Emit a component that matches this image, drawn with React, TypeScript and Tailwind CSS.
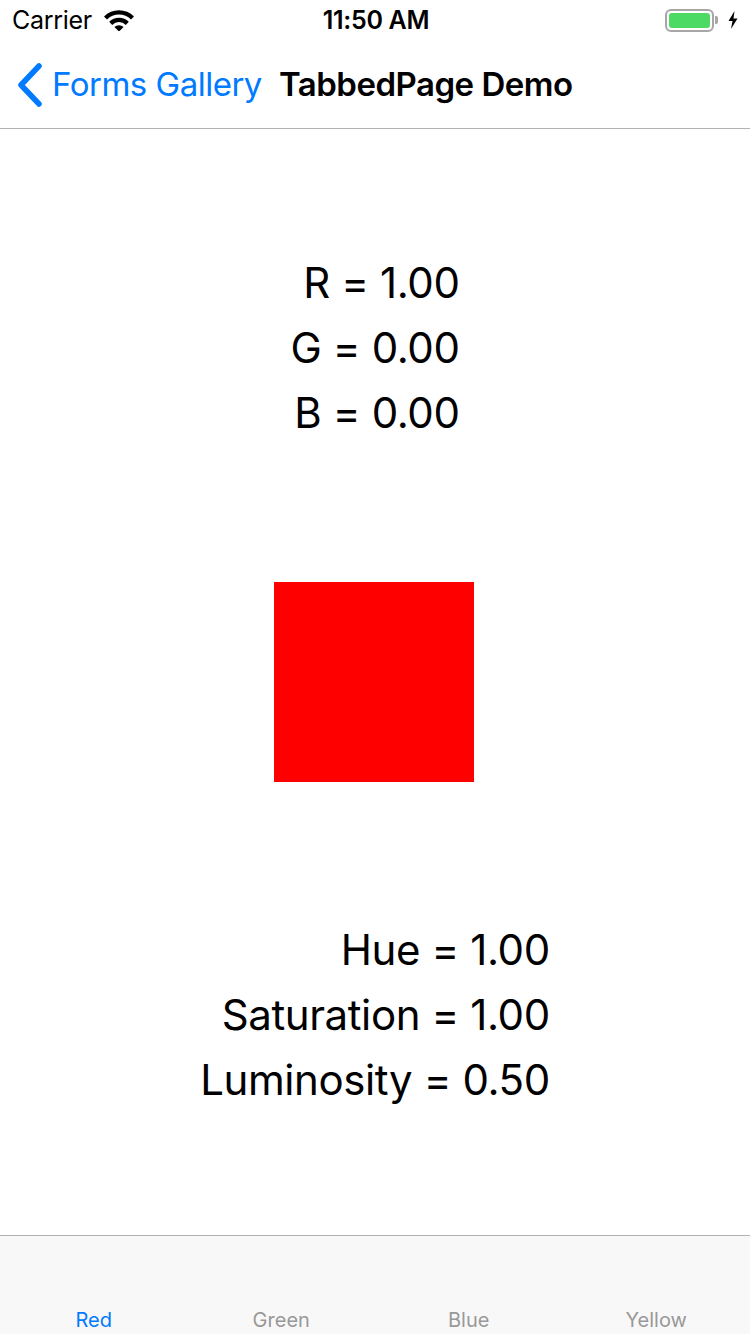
import React from 'react';

const font = { fontFamily: 'Inter, "Noto Sans", sans-serif' };

const Wifi = () => (
  <svg width="32" height="22" viewBox="0 0 32 22" className="ml-[11px]">
    <path d="M1 7.5 A21 21 0 0 1 31 7.5 L28 10.6 A16.6 16.6 0 0 0 4 10.6 Z" fill="#000" />
    <path d="M6.2 12.8 A13.6 13.6 0 0 1 25.8 12.8 L22.8 15.9 A9.3 9.3 0 0 0 9.2 15.9 Z" fill="#000" />
    <path d="M11.4 18.1 A6.4 6.4 0 0 1 20.6 18.1 L16 22.5 Z" fill="#000" />
  </svg>
);

const Battery = () => (
  <div className="flex items-center">
    <div className="w-[49px] h-[23px] rounded-[6px] border-[2px] border-[#a6a6a6] p-[2px] box-border">
      <div className="w-full h-full rounded-[3px] bg-[#4cd964]" />
    </div>
    <div className="w-[3px] h-[8px] rounded-r-[2px] bg-[#a6a6a6] ml-[1px]" />
    <svg width="10" height="18" viewBox="0 0 10 18" className="ml-[10px]">
      <path d="M6.5 0 L0.5 10 L4.5 10 L3 18 L9.5 7.5 L5.5 7.5 Z" fill="#000" />
    </svg>
  </div>
);

const tabs = ['Red', 'Green', 'Blue', 'Yellow'];

export default function App() {
  return (
    <div className="w-[750px] h-[1334px] bg-white flex flex-col overflow-hidden" style={font}>
      {/* status bar */}
      <div className="h-[40px] flex items-center justify-between px-[12px] relative">
        <div className="flex items-center">
          <span className="text-[25px] leading-none tracking-[-0.3px] text-black">Carrier</span>
          <Wifi />
        </div>
        <span className="absolute left-[2px] right-0 text-center text-[25px] font-semibold leading-none tracking-[-0.3px] text-black pointer-events-none">
          11:50 AM
        </span>
        <div>
          <Battery />
        </div>
      </div>

      {/* nav bar */}
      <div className="h-[89px] flex items-center border-b border-[#b2b2b2] pt-[2px]">
        <svg width="28" height="44" viewBox="0 0 28 44" className="ml-[16px]">
          <path d="M23 3 L5 22 L23 41" stroke="#007aff" strokeWidth="5.5" fill="none" strokeLinecap="round" strokeLinejoin="round" />
        </svg>
        <span className="ml-[8px] text-[33px] text-[#007aff] tracking-[-0.5px]">Forms Gallery</span>
        <span className="ml-[17px] text-[33px] font-semibold text-black tracking-[-0.5px]">TabbedPage Demo</span>
      </div>

      {/* content */}
      <div className="flex-1 flex flex-col items-center pt-[121px]">
        <div className="flex flex-col items-end text-[42px] leading-[65px] tracking-[-0.4px] text-black">
          <span>R = 1.00</span>
          <span>G = 0.00</span>
          <span>B = 0.00</span>
        </div>
        <div className="w-[200px] h-[200px] bg-[#ff0000] mt-[137px] -translate-x-[1px]" />
        <div className="flex flex-col items-end text-[42px] leading-[65px] tracking-[-0.4px] text-black mt-[135px]">
          <span>Hue = 1.00</span>
          <span>Saturation = 1.00</span>
          <span>Luminosity = 0.50</span>
        </div>
      </div>

      {/* tab bar */}
      <div className="h-[99px] border-t border-[#b2b2b2] bg-[#f8f8f8] grid grid-cols-4 pt-[72px]">
        {tabs.map((t, i) => (
          <div
            key={t}
            className={`text-center text-[20px] leading-[24px] ${i === 0 ? 'text-[#007aff]' : 'text-[#999999]'}`}
          >
            {t}
          </div>
        ))}
      </div>
    </div>
  );
}
